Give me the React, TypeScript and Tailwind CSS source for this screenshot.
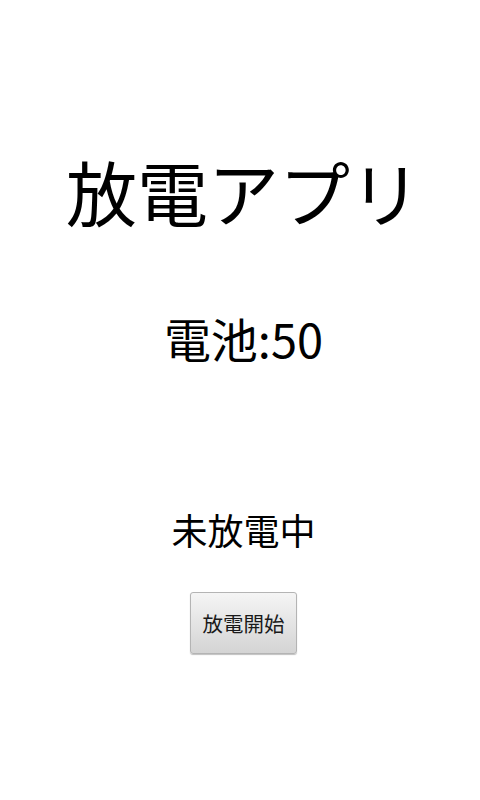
export default function App() {
  return (
    <div
      className="w-[480px] h-[800px] bg-white text-black flex flex-col items-center pl-[7px]"
      style={{ fontFamily: '"Noto Sans CJK JP", "Noto Sans", sans-serif' }}
    >
      <h1 className="mt-[155px] text-[71px] leading-[70px] font-normal">放電アプリ</h1>
      <p className="mt-[90px] text-[47px] leading-[46px]">電池:50</p>
      <p className="mt-[151px] text-[36px] leading-[35px]">未放電中</p>
      <button className="mt-[45px] w-[107px] h-[62px] rounded-[3px] border border-[#b4b4b4] bg-gradient-to-b from-[#f5f5f5] to-[#d4d4d4] shadow-[0_1px_1px_rgba(0,0,0,0.25)] text-[20.5px] leading-none text-[#1a1a1a]">
        放電開始
      </button>
    </div>
  )
}
